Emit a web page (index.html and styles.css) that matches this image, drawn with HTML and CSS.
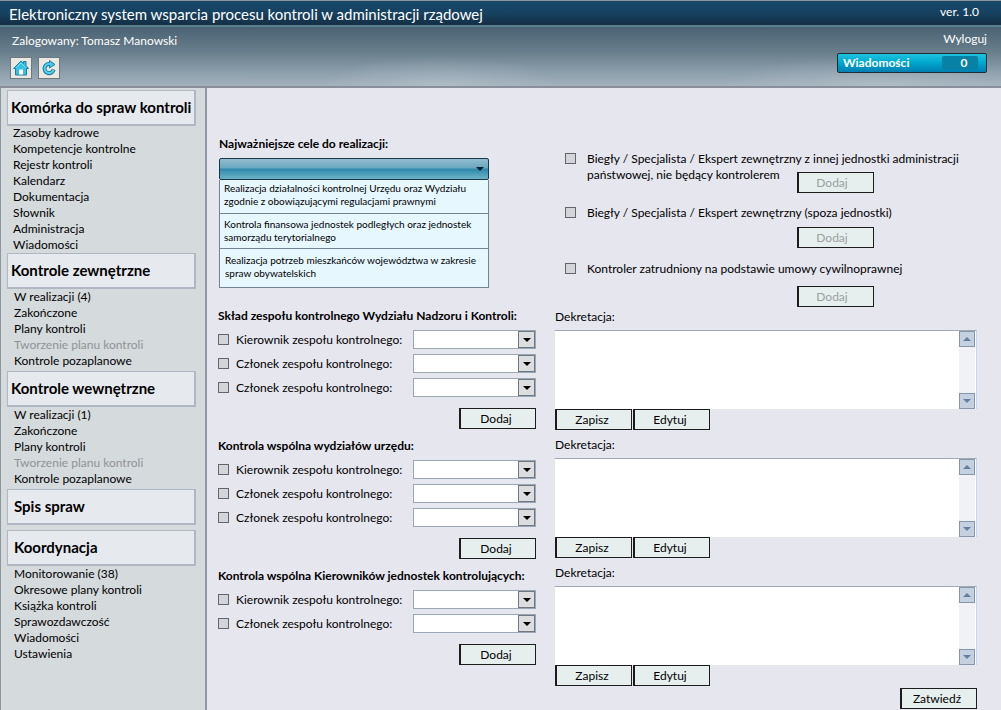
FILE: index.html
```html
<!DOCTYPE html>
<html lang="pl">
<head>
<meta charset="utf-8">
<title>Elektroniczny system wsparcia procesu kontroli</title>
<link rel="stylesheet" href="styles.css">
</head>
<body>
<svg class="sprite" aria-hidden="true">
  <symbol id="down" viewBox="0 0 8 4"><path d="M0 0h8L4 4z" fill="currentColor"/></symbol>
  <symbol id="up" viewBox="0 0 8 4"><path d="M0 4h8L4 0z" fill="currentColor"/></symbol>
</svg>
<header class="header">
  <div class="titlebar">
    <h1 class="title">Elektroniczny system wsparcia procesu kontroli w administracji rządowej</h1>
    <span class="version">ver. 1.0</span>
  </div>
  <div class="userbar">
    <div class="user">
      <span class="user-name">Zalogowany: Tomasz Manowski</span>
      <div class="tools">
        <button class="tool" type="button" aria-label="Strona główna">
          <svg width="18" height="18" viewBox="0 0 18 18"><path d="M1.500 9.500 9 2l2.500 2.300V2.500h2.500v4.200l2.500 2.800H14.500v6.500h-11v-6.500z" fill="#35c0e6" stroke="#1c7f9e" stroke-linejoin="round"/><path d="M4.500 8.500 9 4l4.500 4.500" fill="none" stroke="#7fe0f5"/><path d="M7 10.500h4v5H7z" fill="#fff"/></svg>
        </button>
        <button class="tool" type="button" aria-label="Odśwież">
          <svg width="18" height="18" viewBox="0 0 18 18"><path d="M10.500 5.200A4.600 4.600 0 1 0 13.600 10.500" fill="none" stroke="#1c7f9e" stroke-width="4"/><path d="M9.500 1.500 15 5.500 9.500 9z" fill="#45c8ea" stroke="#1c7f9e" stroke-linejoin="round"/><path d="M11 5.200A4.600 4.600 0 1 0 13.500 11" fill="none" stroke="#55d0ee" stroke-width="2"/></svg>
        </button>
      </div>
    </div>
    <div class="session">
      <a class="logout" href="#">Wyloguj</a>
      <button class="messages" type="button"><span>Wiadomości</span><span class="count">0</span></button>
    </div>
  </div>
</header>
<div class="body">
  <nav class="sidebar">
    <h2 class="menu-title">Komórka do spraw kontroli</h2>
    <ul class="menu tight">
      <li><a href="#">Zasoby kadrowe</a></li>
      <li><a href="#">Kompetencje kontrolne</a></li>
      <li><a href="#">Rejestr kontroli</a></li>
      <li><a href="#">Kalendarz</a></li>
      <li><a href="#">Dokumentacja</a></li>
      <li><a href="#">Słownik</a></li>
      <li><a href="#">Administracja</a></li>
      <li><a href="#">Wiadomości</a></li>
    </ul>
    <h2 class="menu-title">Kontrole zewnętrzne</h2>
    <ul class="menu">
      <li><a href="#">W realizacji (4)</a></li>
      <li><a href="#">Zakończone</a></li>
      <li><a href="#">Plany kontroli</a></li>
      <li><a class="off" href="#">Tworzenie planu kontroli</a></li>
      <li><a href="#">Kontrole pozaplanowe</a></li>
    </ul>
    <h2 class="menu-title">Kontrole wewnętrzne</h2>
    <ul class="menu">
      <li><a href="#">W realizacji (1)</a></li>
      <li><a href="#">Zakończone</a></li>
      <li><a href="#">Plany kontroli</a></li>
      <li><a class="off" href="#">Tworzenie planu kontroli</a></li>
      <li><a href="#">Kontrole pozaplanowe</a></li>
    </ul>
    <h2 class="menu-title indented spaced">Spis spraw</h2>
    <h2 class="menu-title indented">Koordynacja</h2>
    <ul class="menu">
      <li><a href="#">Monitorowanie (38)</a></li>
      <li><a href="#">Okresowe plany kontroli</a></li>
      <li><a href="#">Książka kontroli</a></li>
      <li><a href="#">Sprawozdawczość</a></li>
      <li><a href="#">Wiadomości</a></li>
      <li><a href="#">Ustawienia</a></li>
    </ul>
  </nav>
  <main class="main">
    <section class="goals">
      <label class="heading" for="goal">Najważniejsze cele do realizacji:</label>
      <div class="goal-box">
        <div class="goal-head">
          <select id="goal" class="goal-select"><option></option></select>
          <svg class="goal-arrow" width="8" height="4"><use href="#down"/></svg>
        </div>
        <ul class="goal-list" role="listbox" aria-label="Cele">
          <li role="option">Realizacja działalności kontrolnej Urzędu oraz Wydziału zgodnie z obowiązującymi regulacjami prawnymi</li>
          <li role="option">Kontrola finansowa jednostek podległych oraz jednostek samorządu terytorialnego</li>
          <li role="option">Realizacja potrzeb mieszkańców województwa w zakresie spraw obywatelskich</li>
        </ul>
      </div>
    </section>
    <section class="experts">
      <div class="expert">
        <input class="check" type="checkbox" id="e1"><label for="e1">Biegły / Specjalista / Ekspert zewnętrzny z innej jednostki administracji<br>państwowej, nie będący kontrolerem</label>
        <button class="btn tucked" type="button" disabled>Dodaj</button>
      </div>
      <div class="expert">
        <input class="check" type="checkbox" id="e2"><label for="e2">Biegły / Specjalista / Ekspert zewnętrzny (spoza jednostki)</label>
        <button class="btn" type="button" disabled>Dodaj</button>
      </div>
      <div class="expert last">
        <input class="check" type="checkbox" id="e3"><label for="e3">Kontroler zatrudniony na podstawie umowy cywilnoprawnej</label>
        <button class="btn" type="button" disabled>Dodaj</button>
      </div>
    </section>
    <div class="teams">
      <section class="team">
        <h3 class="heading">Skład zespołu kontrolnego Wydziału Nadzoru i Kontroli:</h3>
        <div class="member"><input class="check" type="checkbox" id="a1"><label for="a1">Kierownik zespołu kontrolnego:</label><span class="combo"><select aria-label="Kierownik zespołu kontrolnego"><option></option></select><span class="combo-arrow"><svg width="8" height="4"><use href="#down"/></svg></span></span></div>
        <div class="member"><input class="check" type="checkbox" id="a2"><label for="a2">Członek zespołu kontrolnego:</label><span class="combo"><select aria-label="Członek zespołu kontrolnego"><option></option></select><span class="combo-arrow"><svg width="8" height="4"><use href="#down"/></svg></span></span></div>
        <div class="member"><input class="check" type="checkbox" id="a3"><label for="a3">Członek zespołu kontrolnego:</label><span class="combo"><select aria-label="Członek zespołu kontrolnego"><option></option></select><span class="combo-arrow"><svg width="8" height="4"><use href="#down"/></svg></span></span></div>
        <button class="btn add" type="button">Dodaj</button>
      </section>
      <section class="team">
        <h3 class="heading">Kontrola wspólna wydziałów urzędu:</h3>
        <div class="member"><input class="check" type="checkbox" id="b1"><label for="b1">Kierownik zespołu kontrolnego:</label><span class="combo"><select aria-label="Kierownik zespołu kontrolnego"><option></option></select><span class="combo-arrow"><svg width="8" height="4"><use href="#down"/></svg></span></span></div>
        <div class="member"><input class="check" type="checkbox" id="b2"><label for="b2">Członek zespołu kontrolnego:</label><span class="combo"><select aria-label="Członek zespołu kontrolnego"><option></option></select><span class="combo-arrow"><svg width="8" height="4"><use href="#down"/></svg></span></span></div>
        <div class="member"><input class="check" type="checkbox" id="b3"><label for="b3">Członek zespołu kontrolnego:</label><span class="combo"><select aria-label="Członek zespołu kontrolnego"><option></option></select><span class="combo-arrow"><svg width="8" height="4"><use href="#down"/></svg></span></span></div>
        <button class="btn add" type="button">Dodaj</button>
      </section>
      <section class="team">
        <h3 class="heading">Kontrola wspólna Kierowników jednostek kontrolujących:</h3>
        <div class="member"><input class="check" type="checkbox" id="c1"><label for="c1">Kierownik zespołu kontrolnego:</label><span class="combo"><select aria-label="Kierownik zespołu kontrolnego"><option></option></select><span class="combo-arrow"><svg width="8" height="4"><use href="#down"/></svg></span></span></div>
        <div class="member"><input class="check" type="checkbox" id="c2"><label for="c2">Członek zespołu kontrolnego:</label><span class="combo"><select aria-label="Członek zespołu kontrolnego"><option></option></select><span class="combo-arrow"><svg width="8" height="4"><use href="#down"/></svg></span></span></div>
        <button class="btn add" type="button">Dodaj</button>
      </section>
    </div>
    <div class="notes">
      <section class="note">
        <label for="n1">Dekretacja:</label>
        <div class="memo"><textarea id="n1"></textarea><div class="scroll"><button type="button" aria-label="W górę"><svg width="8" height="4"><use href="#up"/></svg></button><button type="button" aria-label="W dół"><svg width="8" height="4"><use href="#down"/></svg></button></div></div>
        <div class="actions"><button class="btn" type="button">Zapisz</button><button class="btn" type="button">Edytuj</button></div>
      </section>
      <section class="note">
        <label for="n2">Dekretacja:</label>
        <div class="memo"><textarea id="n2"></textarea><div class="scroll"><button type="button" aria-label="W górę"><svg width="8" height="4"><use href="#up"/></svg></button><button type="button" aria-label="W dół"><svg width="8" height="4"><use href="#down"/></svg></button></div></div>
        <div class="actions"><button class="btn" type="button">Zapisz</button><button class="btn" type="button">Edytuj</button></div>
      </section>
      <section class="note">
        <label for="n3">Dekretacja:</label>
        <div class="memo"><textarea id="n3"></textarea><div class="scroll"><button type="button" aria-label="W górę"><svg width="8" height="4"><use href="#up"/></svg></button><button type="button" aria-label="W dół"><svg width="8" height="4"><use href="#down"/></svg></button></div></div>
        <div class="actions"><button class="btn" type="button">Zapisz</button><button class="btn" type="button">Edytuj</button></div>
      </section>
      <button class="btn confirm" type="button">Zatwiedź</button>
    </div>
  </main>
</div>
</body>
</html>
```
FILE: styles.css
```css
* { box-sizing: border-box; }
body {
  margin: 0;
  min-height: 100vh;
  display: flex;
  flex-direction: column;
  background: #e6e6ef;
  color: #000;
  font: 12px/16px Lato, "Open Sans", sans-serif;
}
h1, h2, h3, ul { margin: 0; padding: 0; }
ul { list-style: none; }
a { color: inherit; text-decoration: none; }
button, select, textarea { font: inherit; color: inherit; }
input { margin: 0; }
.sprite { display: none; }

.header {
  color: #fff;
  border-top: 1px solid #8f969c;
  border-bottom: 2px solid #898f9a;
}
.titlebar {
  display: flex;
  justify-content: space-between;
  height: 26px;
  padding: 0 22px 0 9px;
  background: linear-gradient(#18486a, #174363 45%, #152f45);
  border-bottom: 2px solid #57808a;
}
.title { font-size: 15px; line-height: 26px; font-weight: 400; }
.version { line-height: 22px; }
.userbar {
  display: flex;
  justify-content: space-between;
  height: 59px;
  padding: 4px 14px 0 10px;
  background:
    radial-gradient(ellipse 120px 30px at 44% 100%, rgba(200, 210, 216, 0.35), transparent),
    radial-gradient(ellipse 160px 30px at 88% 100%, rgba(200, 210, 216, 0.35), transparent),
    linear-gradient(#4a6274, #6b808d 45%, #8b9dab 75%, #a3b1bc);
}
.user-name { display: block; padding: 1px 0 1px 2px; line-height: 18px; }
.tools { display: flex; gap: 6px; padding-top: 6px; }
.tool {
  width: 22px;
  height: 22px;
  padding: 1px;
  border: 1px solid #6f7a80;
  background: #e9e9e2;
  line-height: 0;
}
.session { display: flex; flex-direction: column; align-items: flex-end; gap: 6px; }
.logout { line-height: 16px; }
.messages {
  display: flex;
  justify-content: space-between;
  align-items: center;
  width: 150px;
  height: 20px;
  padding: 0 8px 0 5px;
  border: 1px solid #202c34;
  border-radius: 2px;
  background: linear-gradient(#1fc3df, #00a9cf 45%, #007fb2);
  color: #fff;
  font-weight: 700;
}
.count {
  width: 36px;
  padding-left: 8px;
  border-radius: 2px;
  background: #0782a6;
  line-height: 14px;
}

.body { flex: 1; display: flex; }
.sidebar {
  flex: none;
  width: 207px;
  padding: 2px 9px 0 6px;
  background: #d5dadd;
  border-left: 1px solid #8e94a0;
  border-right: 2px solid #9297a5;
}
.menu-title {
  padding: 0 3px;
  border: 1px solid #b0b7c3;
  border-width: 1px 2px 2px 1px;
  background: #e6e9ee;
  font-size: 15px;
  line-height: 33px;
  white-space: nowrap;
}
.indented { padding-left: 6px; }
.spaced { margin-bottom: 5px; }
.menu { margin-bottom: 2px; padding-left: 7px; }
.tight { margin: -1px 0 0; padding-left: 6px; }
.off { color: #8f9395; }

.main {
  flex: 1;
  display: grid;
  grid-template-columns: 318px 1fr;
  grid-template-rows: 172px auto;
  column-gap: 19px;
  align-content: start;
  padding: 48px 24px 0 11px;
}
.heading { display: block; font-size: 12px; font-weight: 700; line-height: 16px; white-space: nowrap; }
.goals { padding-left: 1px; }
.goal-box { width: 270px; margin-top: 6px; }
.goal-head { position: relative; }
.goal-select {
  display: block;
  appearance: none;
  width: 100%;
  height: 22px;
  border: 1px solid #17384a;
  border-radius: 2px;
  background: linear-gradient(#93bccf, #6aa7bf 45%, #2d88aa 50%, #6db3c6);
}
.goal-arrow { position: absolute; right: 5px; top: 9px; color: #062333; }
.goal-list { border: 1px solid #71848f; border-top: 0; background: #e6f7fe; font-size: 10px; line-height: 13px; }
.goal-list li { padding: 2px 4px 5px; }
.goal-list li + li { border-top: 1px solid #71848f; padding: 4px; }
.goal-list li:last-child { padding: 5px 5px 7px; }

.experts { display: flex; flex-direction: column; gap: 12px; padding: 15px 0 0 10px; }
.expert { display: grid; grid-template-columns: 22px 1fr; }
.expert .check { margin-top: 2px; }
.expert label { white-space: nowrap; }
.expert .btn { grid-column: 2; margin: 6px 0 0 210px; }
.expert .tucked { margin-top: -11px; }
.last { margin-top: 1px; }
.last .btn { margin-top: 9px; }
.check {
  appearance: none;
  width: 11px;
  height: 11px;
  border: 1px solid #62656a;
  background: #d3d5da;
}
.btn {
  width: 77px;
  height: 21px;
  padding: 0 4px 0 0;
  border: 1px solid #1c1c1c;
  border-left-width: 2px;
  background: #e6efee;
  line-height: 16px;
}
.btn:disabled { padding-right: 8px; color: #9b9fa0; }

.teams { display: flex; flex-direction: column; gap: 9px; }
.team { display: flex; flex-direction: column; gap: 5px; }
.team .heading { margin-bottom: 1px; }
.member { display: flex; align-items: center; height: 19px; }
.member label { flex: 1; padding-left: 7px; }
.combo { position: relative; width: 123px; height: 19px; }
.combo select {
  display: block;
  appearance: none;
  width: 100%;
  height: 100%;
  border: 1px solid #9aa7b5;
  border-radius: 0;
  background: #fff;
}
.combo-arrow {
  position: absolute;
  top: 1px;
  right: 1px;
  width: 17px;
  height: 17px;
  display: grid;
  place-items: center;
  border: 1px solid #6f7783;
  background: #dcdddf;
  pointer-events: none;
}
.add { align-self: flex-end; margin-top: 6px; }

.notes { display: flex; flex-direction: column; gap: 7px; padding-top: 1px; }
.note label { display: block; }
.memo {
  display: flex;
  height: 79px;
  margin-top: 5px;
  padding-right: 1px;
  border-top: 1px solid #9fabb8;
  border-right: 1px solid #c9d6e6;
  background: #fff;
}
.memo textarea { flex: 1; border: 0; padding: 2px; background: #fff; resize: none; }
.scroll { display: flex; flex-direction: column; justify-content: space-between; background: #f0f2f5; }
.scroll button {
  display: grid;
  place-items: center;
  width: 16px;
  height: 16px;
  padding: 0;
  border: 1px solid #8496ab;
  background: #c5d0e0;
  color: #65809f;
}
.actions { display: flex; gap: 1px; }
.confirm { align-self: flex-end; margin-top: -5px; }
```
